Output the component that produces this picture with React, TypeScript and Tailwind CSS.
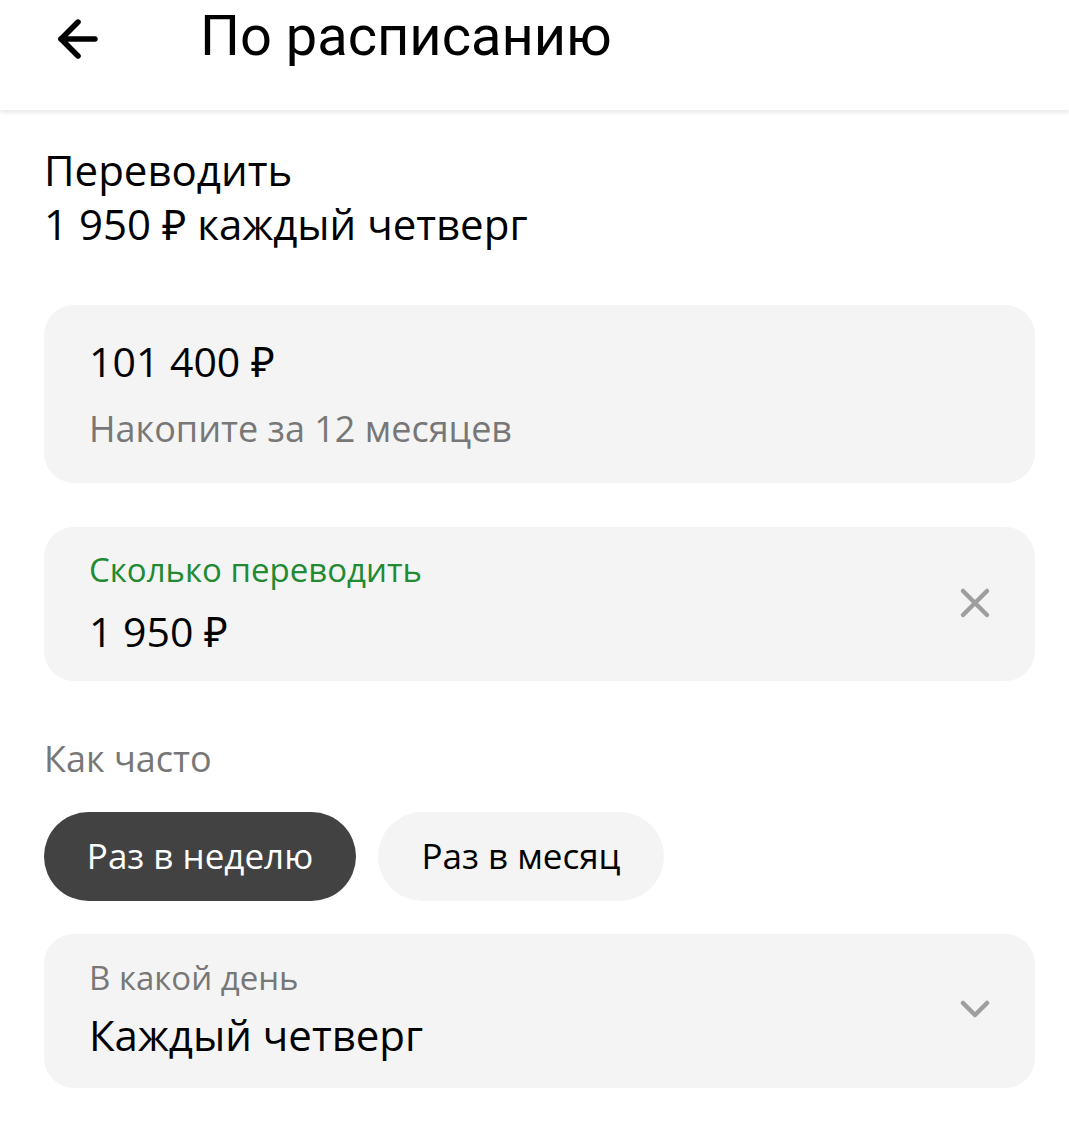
import { ArrowLeft } from "lucide-react";

export default function App() {
  return (
    <div className="w-[1069px] h-[1124px] bg-white text-black" style={{ fontFamily: "'Open Sans', 'Noto Sans', sans-serif" }}>
      <header className="h-[110px] flex items-start shadow-[0_3px_4px_rgba(0,0,0,0.08)] relative">
        <div className="pl-[49px] pt-[10px] w-[200px]">
          <ArrowLeft size={58} strokeWidth={2.3} />
        </div>
        <h1 className="text-[56px] leading-[74px] -mt-[1px]" style={{ fontFamily: "Roboto, sans-serif" }}>По расписанию</h1>
      </header>

      <div className="pl-[44px] pr-[34px]">
        <div className="pt-[33px] text-[42px] leading-[54px]">
          <div>Переводить</div>
          <div>1 950 ₽ каждый четверг</div>
        </div>

        <div className="mt-[54px] h-[178px] rounded-[30px] bg-[#f4f4f4] px-[45px] pt-[30px]">
          <div className="text-[41px] leading-[52px]">101 400 ₽</div>
          <div className="mt-[18px] text-[36px] leading-[48px] text-[#777777]">Накопите за 12 месяцев</div>
        </div>

        <div className="mt-[44px] h-[154px] rounded-[30px] bg-[#f4f4f4] pl-[45px] pr-[44px] flex items-center">
          <div className="flex-1">
            <div className="text-[33px] leading-[44px] text-[#218a32] -mt-[4px]">Сколько переводить</div>
            <div className="mt-[14px] text-[41px] leading-[50px]">1 950 ₽</div>
          </div>
          <svg width="32" height="32" viewBox="0 0 32 32" className="mb-[2px]">
            <path d="M4 4 L28 28 M28 4 L4 28" stroke="#9e9e9e" strokeWidth="4.5" strokeLinecap="round" />
          </svg>
        </div>

        <div className="mt-[54px] text-[36px] leading-[48px] text-[#777777]">Как часто</div>

        <div className="mt-[29px] flex gap-[22px]">
          <button className="h-[89px] w-[312px] rounded-full bg-[#424242] text-white text-[35px]">Раз в неделю</button>
          <button className="h-[89px] w-[286px] rounded-full bg-[#f4f4f4] text-black text-[35px]">Раз в месяц</button>
        </div>

        <div className="mt-[33px] h-[154px] rounded-[30px] bg-[#f4f4f4] pl-[45px] pr-[44px] flex items-center">
          <div className="flex-1">
            <div className="text-[33px] leading-[44px] text-[#777777] -mt-[4px]">В какой день</div>
            <div className="mt-[8px] text-[42px] leading-[54px]">Каждый четверг</div>
          </div>
          <svg width="32" height="22" viewBox="0 0 32 22" className="mb-[4px]">
            <path d="M4 5 L16 17 L28 5" stroke="#9e9e9e" strokeWidth="4.5" strokeLinecap="round" strokeLinejoin="round" fill="none" />
          </svg>
        </div>
      </div>
    </div>
  );
}
